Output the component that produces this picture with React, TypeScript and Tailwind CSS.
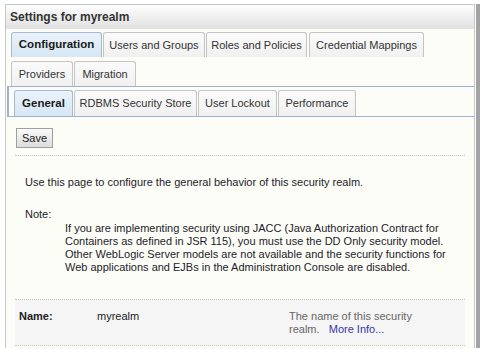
import React from 'react';

const Tab = ({ label, width, selected = false, height = 'h-[25px]' }: { label: string; width: string; selected?: boolean; height?: string }) => (
  <div
    className={`${width} ${height} flex items-center justify-center rounded-t-[3px] border border-b-0 ${
      selected
        ? 'border-[#a5b8d2] bg-linear-to-b from-[#eaf2fa] to-[#d6e6f4] font-bold text-[11.5px] text-[#1a1a1a]'
        : 'border-[#c4c4c4] bg-linear-to-b from-[#fbfbfb] to-[#f0f0f0] text-[#333]'
    }`}
  >
    {label}
  </div>
);

const App = () => {
  return (
    <div className="w-[482px] h-[348px] overflow-hidden bg-white font-['Liberation_Sans',Arial,sans-serif] text-[11px] text-[#1c1c2a]">
      <div className="pl-[5px] pt-[4px]">
        <div className="w-[470px] h-[360px] border border-[#c6c6c6] bg-[#fdfdf8] shadow-[1px_0_0_#ffffff,5px_0_0_#a3a3a3]">
          {/* Title bar */}
          <div className="h-[24px] flex items-center pl-[4px] bg-linear-to-b from-[#fdfdfd] to-[#e1e1e1] font-bold text-[12px] text-[#333]">
            Settings for myrealm
          </div>

          {/* Top level tabs */}
          <div className="px-[5px] pt-[3px] flex flex-col gap-[4px]">
            <div className="flex gap-[1px]">
              <Tab label="Configuration" width="w-[91px]" selected />
              <Tab label="Users and Groups" width="w-[102px]" />
              <Tab label="Roles and Policies" width="w-[101px]" />
              <Tab label="Credential Mappings" width="w-[115px] ml-[1px]" />
            </div>
            <div className="flex gap-[1px]">
              <Tab label="Providers" width="w-[62px]" />
              <Tab label="Migration" width="w-[62px]" />
            </div>
          </div>

          {/* Second level tabs */}
          <div className="ml-[1px] border-t border-b border-l-2 border-[#9fb2cd] pl-[5px] pt-[3px] flex gap-[1px]">
            <Tab label="General" width="w-[59px]" height="h-[26px]" selected />
            <Tab label="RDBMS Security Store" width="w-[123px]" height="h-[26px]" />
            <Tab label="User Lockout" width="w-[79px]" height="h-[26px]" />
            <Tab label="Performance" width="w-[78px]" height="h-[26px]" />
          </div>

          {/* Content */}
          <div className="pl-[9px] pr-[9px]">
            <div className="mt-[11px] ml-[1px] w-[37px] h-[20px] flex items-center justify-center border border-[#a0a0a0] bg-linear-to-b from-[#fafafa] to-[#dcdcdc] text-[#222]">
              Save
            </div>
            <div className="mt-[7px] border-t border-dotted border-[#c4c4c4]" />

            <div className="pl-[10px] pt-[20px] leading-[13px]">
              <p>Use this page to configure the general behavior of this security realm.</p>
              <p className="mt-[19px]">Note:</p>
              <p className="mt-[1px] pl-[40px]">
                If you are implementing security using JACC (Java Authorization Contract for
                <br />
                Containers as defined in JSR 115), you must use the DD Only security model.
                <br />
                Other WebLogic Server models are not available and the security functions for
                <br />
                Web applications and EJBs in the Administration Console are disabled.
              </p>
            </div>

            <div className="mt-[25px] h-[47px] border-t border-b border-dotted border-[#c4c4c4] bg-[#f5f5f5] flex pt-[10px] leading-[13px]">
              <div className="w-[82px] pl-[4px] font-bold text-[#222]">Name:</div>
              <div className="w-[192px]">myrealm</div>
              <div className="text-[#666]">
                The name of this security
                <br />
                realm.&nbsp;&nbsp; <span className="text-[#3535a8]">More Info...</span>
              </div>
            </div>
          </div>
        </div>
      </div>
    </div>
  );
};

export default App;
